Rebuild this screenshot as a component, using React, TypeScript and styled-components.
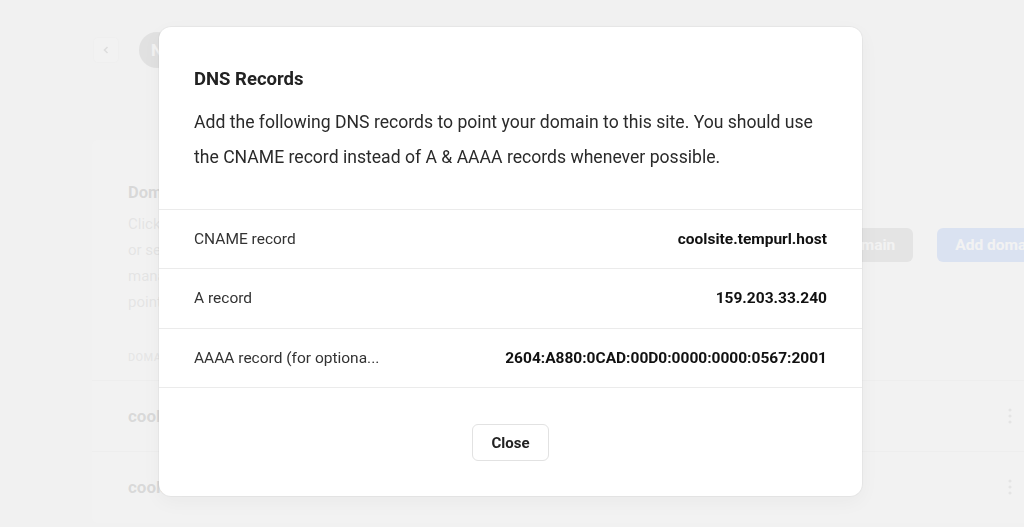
import React from 'react';
import styled, { createGlobalStyle } from 'styled-components';

// Base page reset and font
const GlobalStyle = createGlobalStyle`
  html, body {
    margin: 0;
    padding: 0;
  }
  body {
    background: #f0f0f0;
    font-family: Roboto, 'Liberation Sans', Arial, sans-serif;
    color: #1f1f1f;
    overflow: hidden;
  }
  * {
    box-sizing: border-box;
  }
`;

// ---------- Page behind the dialog ----------

const Page = styled.div`
	width: 1100px;
	height: 527px;
	padding: 32px 0 0 92px;
	overflow: hidden;
`;

const TopBar = styled.header`
	display: flex;
	align-items: center;
	gap: 20px;
	height: 36px;
`;

const BackButton = styled.button`
	display: grid;
	place-items: center;
	width: 26px;
	height: 26px;
	margin-left: 1px;
	padding: 0;
	border: 1px solid #e4e4e4;
	border-radius: 5px;
	background: #fff;
	color: #555;
`;

const Avatar = styled.div`
	display: grid;
	place-items: center;
	width: 36px;
	height: 36px;
	border-radius: 50%;
	background: #747474;
	color: #fff;
	font-weight: 700;
	font-size: 17px;
`;

const SiteName = styled.span`
	font-size: 18px;
	font-weight: 700;
	color: #222;
`;

const Card = styled.section`
	width: 1001px;
	height: 383px;
	margin-top: 72px;
	background: #fff;
	border-radius: 6px;
	overflow: hidden;
`;

const CardHeader = styled.div`
	display: flex;
	align-items: center;
	justify-content: space-between;
	padding: 41px 36px 0;
`;

const Intro = styled.div`
	max-width: 640px;
`;

const CardTitle = styled.h3`
	margin: 0;
	font-size: 16.5px;
	line-height: 24px;
	font-weight: 700;
	color: #2e2e2e;
`;

const CardText = styled.p`
	margin: 6px 0 0;
	font-size: 15px;
	line-height: 26px;
	color: #8a8a8a;
`;

const Actions = styled.div`
	display: flex;
	gap: 24px;
	margin-top: -6px;
`;

const PageButton = styled.button<{ $primary?: boolean }>`
	height: 34px;
	padding: 0 18px;
	border: 0;
	border-radius: 6px;
	font-family: inherit;
	font-size: 15.5px;
	font-weight: 700;
	color: #fff;
	background: ${(p) => (p.$primary ? '#3f7bf7' : '#8a8a8a')};
	white-space: nowrap;
`;

const TableHead = styled.div`
	padding: 35px 36px 14px;
	font-size: 11px;
	line-height: 16px;
	font-weight: 500;
	letter-spacing: 0.4px;
	text-transform: uppercase;
	color: #9a9a9a;
`;

const DomainRow = styled.div`
	display: flex;
	align-items: center;
	height: 71px;
	padding: 0 36px;
	border-top: 1px solid #dedede;
`;

const DomainName = styled.span`
	flex: 1;
	font-size: 17px;
	font-weight: 700;
	color: #333;
`;

const KebabCell = styled.div`
	display: grid;
	place-items: center;
	width: 94px;
	color: #8c8c8c;
`;

// ---------- Dialog ----------

const Overlay = styled.div`
	position: fixed;
	inset: 0;
	display: flex;
	align-items: center;
	justify-content: center;
	padding: 0 3px 4px 0;
	background: rgba(240, 240, 240, 0.88);
`;

const Dialog = styled.div`
	width: 703px;
	background: #fff;
	border-radius: 12px;
	box-shadow: 0 0 0 1px rgba(0, 0, 0, 0.035), 0 6px 20px rgba(0, 0, 0, 0.04);
	overflow: hidden;
`;

const DialogHeader = styled.div`
	padding: 40px 35px 33.5px;
`;

const DialogTitle = styled.h2`
	margin: 0;
	font-size: 18.5px;
	line-height: 24px;
	font-weight: 700;
	color: #222;
`;

const DialogText = styled.p`
	margin: 14.5px 0 0;
	font-size: 17.6px;
	line-height: 35px;
	color: #2a2a2a;
`;

const RecordRow = styled.div`
	display: flex;
	align-items: center;
	justify-content: space-between;
	gap: 16px;
	padding: 19px 35px;
	border-top: 1px solid #ebebeb;
	font-size: 15.5px;
	line-height: 20.5px;
`;

const RecordLabel = styled.span`
	flex: 0 0 190px;
	overflow: hidden;
	white-space: nowrap;
	color: #333;
`;

const RecordValue = styled.span`
	font-weight: 700;
	color: #111;
	white-space: nowrap;
`;

const DialogFooter = styled.div`
	display: flex;
	justify-content: center;
	padding: 36px 0 35px;
	border-top: 1px solid #ebebeb;
`;

const CloseButton = styled.button`
	height: 37px;
	padding: 0 18px;
	border: 1px solid #e2e2e2;
	border-radius: 6px;
	background: #fff;
	font-family: inherit;
	font-size: 15px;
	font-weight: 700;
	color: #222;
`;

const records = [
	{ label: 'CNAME record', value: 'coolsite.tempurl.host' },
	{ label: 'A record', value: '159.203.33.240' },
	{ label: 'AAAA record (for optional IPv6 support)', value: '2604:A880:0CAD:00D0:0000:0000:0567:2001' },
];

const domains = ['coolsite.tempurl.host', 'coolsite.com'];

// labels longer than the column get cut with three dots
const truncate = (text: string, max = 24) => (text.length > max ? `${text.slice(0, max)}...` : text);

const Kebab = () => (
	<svg width="4" height="16" viewBox="0 0 4 16" fill="currentColor">
		<circle cx="2" cy="2" r="1.6" />
		<circle cx="2" cy="8" r="1.6" />
		<circle cx="2" cy="14" r="1.6" />
	</svg>
);

const App: React.FC = () => {
	return (
		<>
			<GlobalStyle />
			<Page>
				<TopBar>
					<BackButton aria-label="Back">
						<svg width="12" height="12" viewBox="0 0 12 12" fill="none" stroke="currentColor" strokeWidth="1.6">
							<path d="M7.5 3 4.5 6l3 3" />
						</svg>
					</BackButton>
					<Avatar>N</Avatar>
					<SiteName>New Cool Site</SiteName>
				</TopBar>

				<Card>
					<CardHeader>
						<Intro>
							<CardTitle>Domains</CardTitle>
							<CardText>
								Click “Add domain” to connect a domain you already own to this site,
								<br />
								or select “Buy domain” to register a new one. You can add several domains and
								<br />
								manage them all from here. Make sure the DNS records of each domain are
								<br />
								pointing to this site.
							</CardText>
						</Intro>
						<Actions>
							<PageButton>Buy domain</PageButton>
							<PageButton $primary>Add domain</PageButton>
						</Actions>
					</CardHeader>
					<TableHead>Domain</TableHead>
					{domains.map((d) => (
						<DomainRow key={d}>
							<DomainName>{d}</DomainName>
							<KebabCell>
								<Kebab />
							</KebabCell>
						</DomainRow>
					))}
				</Card>
			</Page>

			<Overlay>
				<Dialog role="dialog">
					<DialogHeader>
						<DialogTitle>DNS Records</DialogTitle>
						<DialogText>
							Add the following DNS records to point your domain to this site. You should use the CNAME record
							instead of A &amp; AAAA records whenever possible.
						</DialogText>
					</DialogHeader>
					{records.map((r) => (
						<RecordRow key={r.label}>
							<RecordLabel>{truncate(r.label)}</RecordLabel>
							<RecordValue>{r.value}</RecordValue>
						</RecordRow>
					))}
					<DialogFooter>
						<CloseButton>Close</CloseButton>
					</DialogFooter>
				</Dialog>
			</Overlay>
		</>
	);
};

export default App;
